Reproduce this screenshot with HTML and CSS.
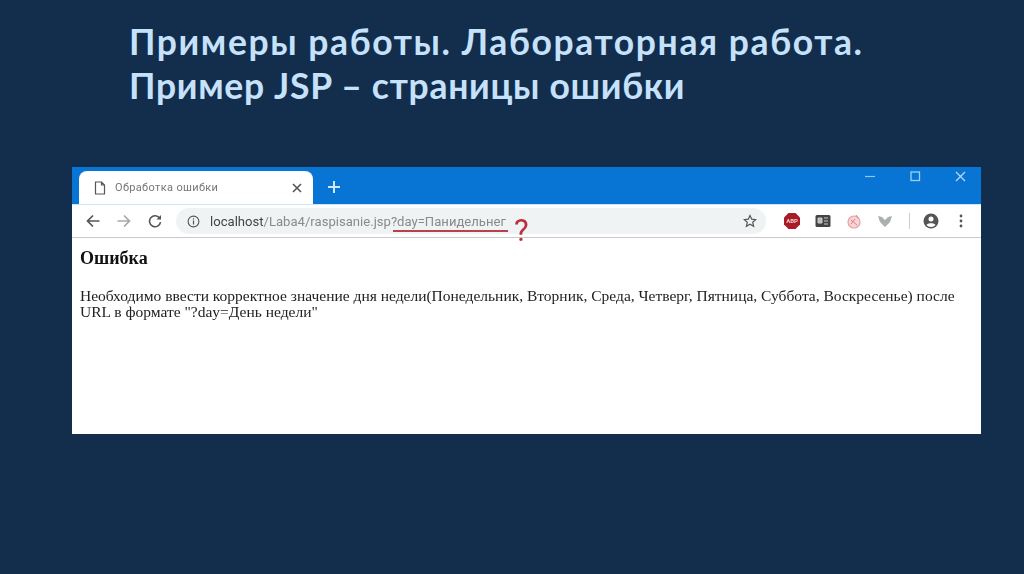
FILE: index.html
```html
<!DOCTYPE html>
<html lang="ru">
<head>
<meta charset="utf-8">
<title>Примеры работы</title>
<link rel="stylesheet" href="styles.css">
</head>
<body>
<main class="slide">
  <h1 class="title"><span class="title-first">Примеры работы. Лабораторная работа.</span><span class="title-second">Пример JSP – страницы ошибки</span></h1>
  <section class="browser">
    <div class="tabbar">
      <div class="tab">
        <svg class="tab-doc" viewBox="0 0 12 14" width="12" height="14"><path d="M1.5 1h6l3 3v9h-9z M7.5 1v3h3" fill="none" stroke="#555" stroke-width="1.2"/></svg>
        <span class="tab-title">Обработка ошибки</span>
        <svg class="tab-close" viewBox="0 0 10 10" width="10" height="10"><path d="M1 1l8 8M9 1l-8 8" stroke="#555" stroke-width="1.6"/></svg>
      </div>
      <svg class="new-tab" viewBox="0 0 12 12" width="12" height="12"><path d="M6 0v12M0 6h12" stroke="#cfe8fb" stroke-width="2"/></svg>
      <div class="win-controls">
        <svg viewBox="0 0 11 11" width="11" height="11"><path d="M0 5.5h10" stroke="#8fc6ef" stroke-width="1.2"/></svg>
        <svg viewBox="0 0 11 11" width="11" height="11"><rect x="1" y="1" width="8.5" height="8.5" fill="none" stroke="#9fd0f2" stroke-width="1.3"/></svg>
        <svg viewBox="0 0 11 11" width="11" height="11"><path d="M1 1l9 9M10 1l-9 9" stroke="#b5daf5" stroke-width="1.3"/></svg>
      </div>
    </div>
    <div class="toolbar">
      <div class="nav">
        <svg viewBox="0 0 14 14" width="14" height="14"><path d="M13.5 7H2M7 1.5L1.5 7 7 12.5" fill="none" stroke="#555" stroke-width="1.7"/></svg>
        <svg viewBox="0 0 14 14" width="14" height="14"><path d="M.5 7H12M7 1.5L12.5 7 7 12.5" fill="none" stroke="#a8a8a8" stroke-width="1.7"/></svg>
        <svg viewBox="0 0 14 14" width="14" height="14"><path d="M11.8 4.5A5.5 5.5 0 1 0 12.5 8" fill="none" stroke="#555" stroke-width="1.6"/><path d="M13 1v4.5H8.5z" fill="#555"/></svg>
      </div>
      <div class="omnibox">
        <svg class="info" viewBox="0 0 14 14" width="13" height="13"><circle cx="7" cy="7" r="5.8" fill="none" stroke="#555" stroke-width="1.2"/><path d="M7 6v4.200M7 3.500v1.400" stroke="#555" stroke-width="1.3"/></svg>
        <span class="url"><span class="host">localhost</span>/Laba4/raspisanie.jsp?day=Панидельнег</span>
        <svg class="star" viewBox="0 0 14 14" width="14" height="14"><path d="M7 1.5l1.7 3.7 4 .4-3 2.7.9 4L7 10.300 3.400 12.300l.9-4-3-2.700 4-.4z" fill="none" stroke="#555" stroke-width="1.2"/></svg>
        <span class="annotation-line"></span>
        <span class="annotation-mark">?</span>
      </div>
      <div class="extensions">
        <svg viewBox="0 0 18 18" width="18" height="18"><path d="M5.5 1h7L17 5.5v7L12.5 17h-7L1 12.5v-7z" fill="#a81c28"/><text class="abp" x="9" y="11" text-anchor="middle">ABP</text></svg>
        <svg viewBox="0 0 18 18" width="18" height="18"><rect x="1.5" y="3" width="15" height="12" rx="1.5" fill="#444"/><path d="M4 6h4v5H4zM10 6h4M10 9h4M10 12h4" fill="#bbb" stroke="#ccc"/></svg>
        <svg viewBox="0 0 18 18" width="18" height="18"><circle cx="9" cy="10" r="6" fill="#f7d5d5" stroke="#e8a0a5" stroke-width="1.2"/><path d="M6 8l6 5M11 3l2 3M6 12l4-5" stroke="#dc8088" fill="none"/></svg>
        <svg viewBox="0 0 18 18" width="18" height="18"><path d="M2 4l4 1 3 3 3-3 4-1-2 6-5 5-5-5z" fill="#aab0ab"/></svg>
        <span class="divider"></span>
        <svg viewBox="0 0 18 18" width="18" height="18"><circle cx="9" cy="9" r="7.5" fill="#555"/><circle cx="9" cy="7" r="2.5" fill="#fff"/><path d="M4.5 13c1-2.500 8-2.500 9 0-1 1-2.500 2-4.500 2s-3.500-1-4.500-2z" fill="#fff"/></svg>
        <svg class="dots" viewBox="0 0 4 14" width="4" height="14"><circle cx="2" cy="2" r="1.4" fill="#555"/><circle cx="2" cy="7" r="1.4" fill="#555"/><circle cx="2" cy="12" r="1.4" fill="#555"/></svg>
      </div>
    </div>
    <div class="page">
      <h2 class="page-heading">Ошибка</h2>
      <p class="page-text">Необходимо ввести корректное значение дня недели(Понедельник, Вторник, Среда, Четверг, Пятница, Суббота, Воскресенье) после URL в формате "?day=День недели"</p>
    </div>
  </section>
</main>
</body>
</html>
```
FILE: styles.css
```css
* { box-sizing: border-box; }
html, body { margin: 0; padding: 0; }
body { width: 1024px; height: 574px; overflow: hidden; background: #132d4d; }
.slide { width: 1024px; height: 574px; padding: 20px 43px 0 72px; display: flex; flex-direction: column; }
.title {
  margin: 0 0 0 57px;
  height: 147px;
  font-family: "Lato", "Noto Sans", sans-serif;
  font-weight: 700;
  font-size: 35.5px;
  line-height: 43.5px;
  color: #c6e2fb;
  white-space: nowrap;
}
.title-first { display: block; letter-spacing: 1.6px; }
.title-second { display: block; letter-spacing: 0.7px; }
.browser { width: 909px; height: 267px; background: #fff; display: flex; flex-direction: column; filter: blur(0.45px); }
.tabbar { height: 37px; flex: none; background: #0875d4; display: flex; align-items: flex-end; padding-left: 7px; }
.tab { width: 234px; height: 33px; background: #fff; border-radius: 8px 8px 0 0; display: flex; align-items: center; padding: 0 11px 0 15px; }
.tab-doc { flex: none; }
.tab-title { margin-left: 9px; flex: 1; font: 11px "Roboto", sans-serif; letter-spacing: .35px; color: #777; }
.tab-close { flex: none; }
.new-tab { margin: 0 0 11px 15px; flex: none; }
.win-controls { margin-left: auto; align-self: flex-start; display: flex; gap: 34px; padding: 4px 15px 0 0; }
.toolbar { height: 34px; flex: none; display: flex; align-items: center; padding-left: 14px; border-top: 1px solid #cde6f8; border-bottom: 1px solid #c9c9c9; }
.nav { display: flex; gap: 17px; align-items: center; }
.omnibox { position: relative; margin-left: 14px; width: 590px; height: 26px; background: #f0f3f4; border-radius: 13px; display: flex; align-items: center; padding: 0 9px; }
.info { margin-left: 2px; flex: none; }
.url { margin-left: 10px; flex: 1; font: 13.1px "Roboto", sans-serif; color: #8a8a8a; white-space: nowrap; }
.host { color: #444; }
.star { flex: none; }
.annotation-line { position: absolute; left: 217px; top: 22px; width: 115px; height: 2px; background: #b8414c; }
.annotation-mark { position: absolute; left: 338px; top: 6px; font: 400 31px/34px "Roboto", sans-serif; color: #b8303d; }
.extensions { margin-left: 17px; display: flex; align-items: center; gap: 13px; }
.abp { font: 700 6px "Roboto", sans-serif; fill: #f3c9cc; }
.divider { width: 1px; height: 16px; background: #ccc; margin: 0 -1px 0 2px; }
.dots { margin-left: 6px; }
.page { flex: 1; padding: 10px 8px 0; font-family: "Liberation Serif", serif; color: #222; }
.page-heading { margin: 0 0 20px; font-size: 18px; line-height: 20px; font-weight: 700; color: #111; }
.page-text { margin: 0; font-size: 15.5px; line-height: 16px; }
```
